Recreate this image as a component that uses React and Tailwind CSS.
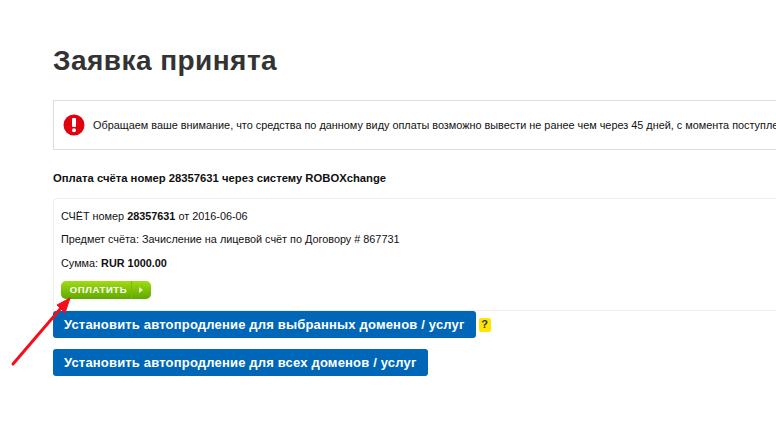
function Notice() {
  return (
    <div className="flex items-center h-[50px] w-[900px] shrink-0 border border-[#dddddd] pl-[9px]">
      <svg width="22" height="22" viewBox="0 0 22 22" className="shrink-0">
        <circle cx="11" cy="11" r="10.5" fill="#e2000f" />
        <rect x="9" y="4" width="4" height="9" rx="1" fill="#fff" />
        <circle cx="11" cy="16.2" r="2" fill="#fff" />
      </svg>
      <span className="ml-[8px] text-[10.86px] text-[#111] whitespace-nowrap">
        Обращаем ваше внимание, что средства по данному виду оплаты возможно вывести не ранее чем через 45 дней, с момента поступления средств
      </span>
    </div>
  );
}

function BlueButton({ children }) {
  return (
    <button
      type="button"
      className="h-[27px] px-[11px] bg-[#0066b8] text-white text-[13px] font-bold rounded-[3px] whitespace-nowrap tracking-[0.18px]"
    >
      {children}
    </button>
  );
}

function App() {
  return (
    <div
      className="relative w-[776px] h-[421px] overflow-hidden bg-white pl-[53px] text-[#111]"
      style={{ fontFamily: '"Liberation Sans", Arial, sans-serif' }}
    >
      <h1 className="pt-[43px] h-[100px] text-[28px] leading-[36px] font-bold text-[#333] tracking-[0.45px]">
        Заявка принята
      </h1>
      <Notice />
      <h2 className="mt-[21px] h-[15px] text-[11.27px] leading-[15px] font-bold whitespace-nowrap">
        Оплата счёта номер 28357631 через систему ROBOXchange
      </h2>
      <div className="mt-[12px] h-[113px] w-[760px] border-t border-b border-l border-[#eeeeee] rounded-tl-[5px] pl-[7px] pt-[10px] text-[10.85px]">
        <p className="h-[23px] leading-[14px]">
          СЧЁТ номер <b>28357631</b> от 2016-06-06
        </p>
        <p className="h-[24px] leading-[14px]">Предмет счёта: Зачисление на лицевой счёт по Договору # 867731</p>
        <p className="h-[25px] leading-[14px]">
          Сумма: <b>RUR 1000.00</b>
        </p>
        <div className="flex items-center w-[90px] h-[18px] rounded-[5px] bg-gradient-to-b from-[#9fdc12] to-[#5fa800] text-white text-[9.5px] font-bold">
          <span className="w-[71px] pl-[5px] text-center tracking-[0.6px] leading-[18px] border-r border-[#7db80a]">ОПЛАТИТЬ</span>
          <svg width="19" height="18" viewBox="0 0 19 18">
            <path d="M7 6l4 3-4 3z" fill="#e8f8c0" />
          </svg>
        </div>
      </div>
      <div className="flex items-center gap-[3px]">
        <BlueButton>Установить автопродление для выбранных доменов / услуг</BlueButton>
        <span className="flex items-center justify-center w-[12px] h-[14px] bg-[#ffe600] rounded-[2px] text-[11px] font-bold text-[#333]">
          ?
        </span>
      </div>
      <div className="mt-[11px]">
        <BlueButton>Установить автопродление для всех доменов / услуг</BlueButton>
      </div>
      <svg className="absolute left-0 top-0 pointer-events-none" width="776" height="421">
        <path d="M13 364L61 308" stroke="#f50f1a" strokeWidth="3" strokeLinecap="round" fill="none" />
        <path d="M70 298L57 305L65 313Z" fill="#f50f1a" stroke="#f50f1a" strokeWidth="1" strokeLinejoin="round" />
      </svg>
    </div>
  );
}

export default App;
